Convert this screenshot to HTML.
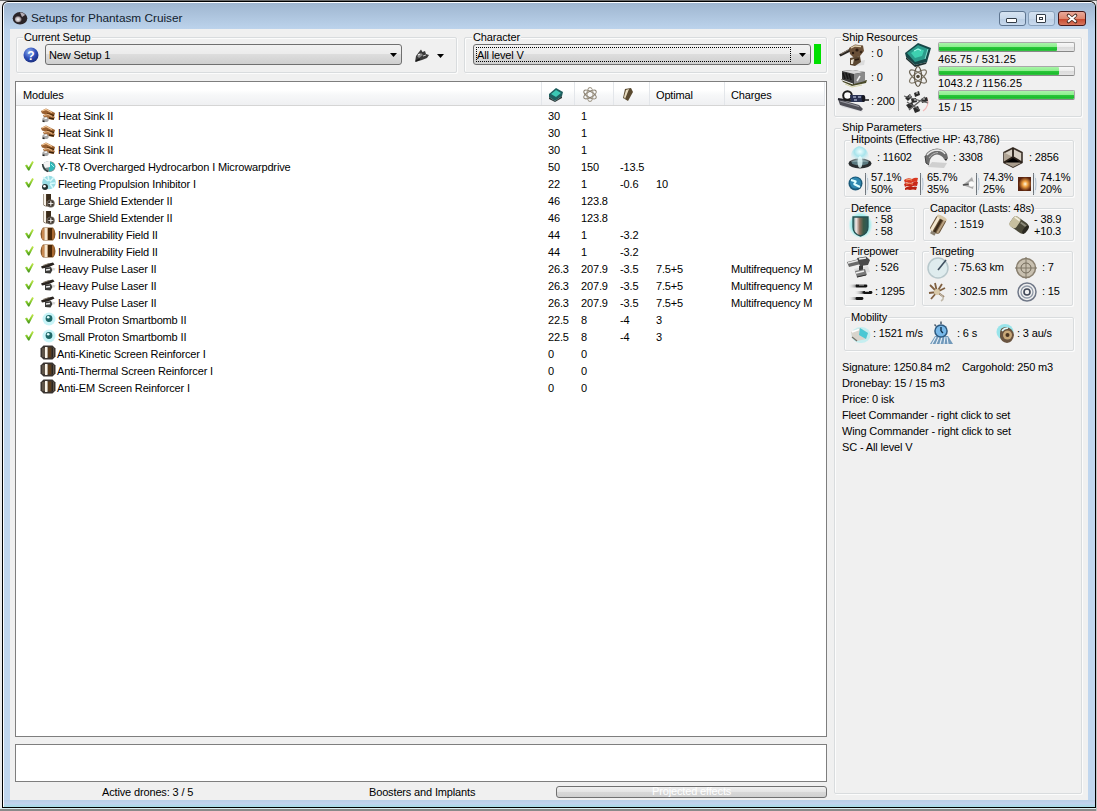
<!DOCTYPE html>
<html><head><meta charset="utf-8">
<style>
html,body{margin:0;padding:0;width:1097px;height:811px;overflow:hidden;background:#e6e6e6;position:relative}
div,span{box-sizing:border-box}
.a{position:absolute}
.t{position:absolute;font-family:"Liberation Sans",sans-serif;font-size:11px;line-height:13px;color:#000;white-space:nowrap;letter-spacing:-0.15px}
.gb{position:absolute;border:1px solid #d9dcde;border-radius:2px;box-shadow:inset 1px 1px 0 #fcfcfc,1px 1px 0 #fcfcfc}
.lbl{background:#f0f0f0;padding:0 1px}
svg{position:absolute;overflow:visible}
</style></head><body>
<svg width="0" height="0" style="position:absolute;left:0;top:0"><defs>
<linearGradient id="chg" x1="0" y1="0" x2="0" y2="1"><stop offset="0" stop-color="#c8ea50"/><stop offset="0.6" stop-color="#7cc428"/><stop offset="1" stop-color="#3a8a18"/></linearGradient>
</defs></svg>

<!-- outside -->
<div class="a" style="left:0;top:0;width:1097px;height:811px;background:#ececec"></div>
<div class="a" style="left:0;top:808px;width:1097px;height:1px;background:#d8eef0"></div>
<div class="a" style="left:0;top:809px;width:1097px;height:2px;background:#8a8a8a"></div>
<div class="a" style="left:1096px;top:0;width:1px;height:811px;background:#c4c4c4"></div>
<div class="a" style="left:0;top:0;width:1097px;height:1px;background:#6a6a6a"></div>
<!-- window frame -->
<div class="a" style="left:2px;top:1px;width:1094px;height:807px;background:#000;border-radius:6px 6px 0 0"></div>
<div class="a" style="left:3px;top:2px;width:1092px;height:805px;background:#fafcff;border-radius:5px 5px 0 0"></div>
<div class="a" style="left:4px;top:3px;width:1091px;height:804px;background:linear-gradient(#9fb6d0,#b3cae3 18px,#bcd3ec 26px,#c0d6ee 40px);border-radius:4px 4px 0 0"></div>
<div class="a" style="left:4px;top:800px;width:1091px;height:7px;background:linear-gradient(#b6cfe6,#c2d2ee 50%,#a4dde6)"></div>
<!-- client -->
<div class="a" style="left:10px;top:29px;width:1078px;height:771px;background:#f0f0f0"></div>
<!-- title -->
<div class="t" style="left:31px;top:12px;font-size:11.8px;color:#10202e;letter-spacing:0">Setups for Phantasm Cruiser</div>
<!-- title buttons -->
<div class="a" style="left:999px;top:11px;width:27px;height:15px;border:1px solid #5e7590;border-radius:3px;background:linear-gradient(#d6e3f1,#c8d9ec 50%,#b9cde3 51%,#c6d8ec)"></div>
<div class="a" style="left:1006px;top:18px;width:11px;height:5px;border:1px solid #333d48;border-radius:1px;background:#fff"></div>
<div class="a" style="left:1028px;top:11px;width:27px;height:15px;border:1px solid #8aa2bc;border-radius:3px;background:linear-gradient(#d3e1f0,#c8d9ec 50%,#bdd0e5 51%,#c9daee)"></div>
<div class="a" style="left:1036px;top:14px;width:10px;height:9px;border:1px solid #333d48;border-radius:1px;background:#fff"></div>
<div class="a" style="left:1039px;top:17px;width:4px;height:3px;border:1px solid #333d48;background:#fff"></div>
<div class="a" style="left:1058px;top:11px;width:28px;height:15px;border:1px solid #47191a;border-radius:3px;background:linear-gradient(#e9a99a,#e08870 50%,#c7452a 51%,#d77860)"></div>
<svg style="left:1058px;top:11px" width="28" height="15"><path d="M10.5 4.5 L17.5 10.5 M17.5 4.5 L10.5 10.5" stroke="#4a2a20" stroke-width="3.6" stroke-linecap="round"/><path d="M10.8 4.8 L17.2 10.2 M17.2 4.8 L10.8 10.2" stroke="#fff" stroke-width="2" stroke-linecap="square"/></svg>
<!-- app icon -->
<svg style="left:12px;top:11px" width="17" height="15"><defs><radialGradient id="apg" cx="0.4" cy="0.55" r="0.5"><stop offset="0" stop-color="#fafafa"/><stop offset="0.6" stop-color="#b8b0b4"/><stop offset="1" stop-color="#2a2226"/></radialGradient></defs><ellipse cx="8" cy="7.3" rx="7.3" ry="6.2" fill="#2a2428"/><ellipse cx="6.8" cy="8" rx="4" ry="3.6" fill="url(#apg)"/><path d="M8 1.5 Q12 1.5 13 4 L10 6 Z" fill="#d8d0d8" opacity="0.8"/></svg>
<!-- group boxes top -->
<div class="gb" style="left:16px;top:37px;width:441px;height:36px"></div>
<div class="t lbl" style="left:23px;top:31px">Current Setup</div>
<div class="gb" style="left:464px;top:37px;width:363px;height:36px"></div>
<div class="t lbl" style="left:472px;top:31px">Character</div>
<!-- help icon -->
<svg style="left:23px;top:47px" width="16" height="16"><defs><radialGradient id="hg" cx="0.4" cy="0.3" r="0.7"><stop offset="0" stop-color="#8fb0f0"/><stop offset="0.6" stop-color="#2f4fb8"/><stop offset="1" stop-color="#1b2f80"/></radialGradient></defs><circle cx="8" cy="8" r="7.5" fill="url(#hg)"/><text x="8" y="12.5" font-family="Liberation Sans" font-weight="bold" font-size="12" fill="#fff" text-anchor="middle">?</text></svg>
<!-- setup combo -->
<div class="a" style="left:45px;top:44px;width:357px;height:21px;border:1px solid #707070;border-radius:3px;background:linear-gradient(#f2f2f2,#ebebeb 50%,#dddddd 50%,#cfcfcf)"></div>
<div class="t" style="left:49px;top:49px">New Setup 1</div>
<svg style="left:390px;top:53px" width="8" height="5"><path d="M0 0 H7 L3.5 4 Z" fill="#000"/></svg>
<!-- ship button -->
<svg style="left:414px;top:48px" width="17" height="16"><path d="M1 14 L2 8 L5 4 L7 1.5 L8.5 4 L11 3 L12 6 L15 7 L13 10 L8 12 Z" fill="#3a3a3a"/><path d="M3 8 L7 5 L9 7 L5 10 Z" fill="#8a8a8a"/><path d="M4 7 L6 6" stroke="#f0f0f0" stroke-width="1.3"/><path d="M9 8 L12 7" stroke="#c8c8c8" stroke-width="1"/><path d="M2 13 L6 11" stroke="#1a1a1a" stroke-width="1.5"/></svg>
<svg style="left:437px;top:54px" width="8" height="5"><path d="M0 0 H7 L3.5 4 Z" fill="#000"/></svg>
<!-- character combo -->
<div class="a" style="left:473px;top:44px;width:338px;height:21px;border:1px solid #707070;border-radius:3px;background:linear-gradient(#f2f2f2,#ebebeb 50%,#dddddd 50%,#cfcfcf)"></div>
<div class="a" style="left:476px;top:47px;width:315px;height:15px;border:1px dotted #000"></div>
<div class="t" style="left:477px;top:49px">All level V</div>
<svg style="left:799px;top:53px" width="8" height="5"><path d="M0 0 H7 L3.5 4 Z" fill="#000"/></svg>
<div class="a" style="left:814px;top:44px;width:7px;height:20px;background:#00e000"></div>

<!-- list box -->
<div class="a" style="left:15px;top:81px;width:812px;height:656px;border:1px solid #7e7e7e;background:#fff"></div>
<div class="a" style="left:16px;top:82px;width:809px;height:24px;background:linear-gradient(#ffffff,#ffffff 35%,#f7f8f9 55%,#eff0f2);border-bottom:1px solid #d5d5d5"></div>
<div class="a" style="left:541px;top:82px;width:1px;height:23px;background:#e3e6ea"></div>
<div class="a" style="left:574px;top:82px;width:1px;height:23px;background:#e3e6ea"></div>
<div class="a" style="left:613px;top:82px;width:1px;height:23px;background:#e3e6ea"></div>
<div class="a" style="left:649px;top:82px;width:1px;height:23px;background:#e3e6ea"></div>
<div class="a" style="left:724px;top:82px;width:1px;height:23px;background:#e3e6ea"></div>
<div class="a" style="left:824px;top:82px;width:1px;height:23px;background:#e3e6ea"></div>
<div class="t" style="left:23px;top:89px">Modules</div>
<div class="t" style="left:656px;top:89px">Optimal</div>
<div class="t" style="left:731px;top:89px">Charges</div>
<!--HDRICONS-->
<!--ROWS-->
<svg style="left:40px;top:107px" width="16" height="16"><path d="M1 4 L6 1.5 L15 6 L14 9.5 L8 8 L2 6.5 Z" fill="#9a6030"/><path d="M2 4 L6 2.5 L12 5.5" stroke="#f4c898" stroke-width="1.2" fill="none"/><path d="M7 6.5 L14 8.5" stroke="#4a2808" stroke-width="1.4"/><path d="M3 8 L8 6.5 L15 10 L13.5 13 L8 12 L4 10.5 Z" fill="#a87040"/><path d="M4 8.5 L8 7.5 L12 9.5" stroke="#e8b888" stroke-width="1" fill="none"/><path d="M9 11 L14 12" stroke="#3a2008" stroke-width="1.4"/><ellipse cx="5.5" cy="12.5" rx="3.2" ry="2.6" fill="#a8a8a8"/><path d="M4.5 11.5 L7 11" stroke="#f8f8f8" stroke-width="1.3"/><path d="M2.5 14 L4.5 14.5" stroke="#202020" stroke-width="1.5"/></svg>
<div class="t" style="left:58px;top:110px">Heat Sink II</div>
<div class="t" style="left:548px;top:110px">30</div>
<div class="t" style="left:581px;top:110px">1</div>
<svg style="left:40px;top:124px" width="16" height="16"><path d="M1 4 L6 1.5 L15 6 L14 9.5 L8 8 L2 6.5 Z" fill="#9a6030"/><path d="M2 4 L6 2.5 L12 5.5" stroke="#f4c898" stroke-width="1.2" fill="none"/><path d="M7 6.5 L14 8.5" stroke="#4a2808" stroke-width="1.4"/><path d="M3 8 L8 6.5 L15 10 L13.5 13 L8 12 L4 10.5 Z" fill="#a87040"/><path d="M4 8.5 L8 7.5 L12 9.5" stroke="#e8b888" stroke-width="1" fill="none"/><path d="M9 11 L14 12" stroke="#3a2008" stroke-width="1.4"/><ellipse cx="5.5" cy="12.5" rx="3.2" ry="2.6" fill="#a8a8a8"/><path d="M4.5 11.5 L7 11" stroke="#f8f8f8" stroke-width="1.3"/><path d="M2.5 14 L4.5 14.5" stroke="#202020" stroke-width="1.5"/></svg>
<div class="t" style="left:58px;top:127px">Heat Sink II</div>
<div class="t" style="left:548px;top:127px">30</div>
<div class="t" style="left:581px;top:127px">1</div>
<svg style="left:40px;top:141px" width="16" height="16"><path d="M1 4 L6 1.5 L15 6 L14 9.5 L8 8 L2 6.5 Z" fill="#9a6030"/><path d="M2 4 L6 2.5 L12 5.5" stroke="#f4c898" stroke-width="1.2" fill="none"/><path d="M7 6.5 L14 8.5" stroke="#4a2808" stroke-width="1.4"/><path d="M3 8 L8 6.5 L15 10 L13.5 13 L8 12 L4 10.5 Z" fill="#a87040"/><path d="M4 8.5 L8 7.5 L12 9.5" stroke="#e8b888" stroke-width="1" fill="none"/><path d="M9 11 L14 12" stroke="#3a2008" stroke-width="1.4"/><ellipse cx="5.5" cy="12.5" rx="3.2" ry="2.6" fill="#a8a8a8"/><path d="M4.5 11.5 L7 11" stroke="#f8f8f8" stroke-width="1.3"/><path d="M2.5 14 L4.5 14.5" stroke="#202020" stroke-width="1.5"/></svg>
<div class="t" style="left:58px;top:144px">Heat Sink II</div>
<div class="t" style="left:548px;top:144px">30</div>
<div class="t" style="left:581px;top:144px">1</div>
<svg style="left:25px;top:161px" width="9" height="10"><path d="M0 4.5 L2 3.5 L3.7 6.3 L7.2 0 L8.8 1 L4.3 9.6 L3.2 9.6 Z" fill="url(#chg)"/></svg>
<svg style="left:40px;top:158px" width="16" height="16"><ellipse cx="9" cy="8.5" rx="6.5" ry="5.5" fill="#7a9090"/><path d="M9 3.5 Q15 4.5 15 9 Q13.5 13 9 13.5 Z" fill="#30b8b8"/><path d="M3 5.5 Q6 2.5 10 3 L10 9 L5 10 Z" fill="#f4f4f4"/><path d="M2.5 6 Q3 11 8 13.5" stroke="#303838" stroke-width="1.4" fill="none"/><path d="M11 6 L14 9" stroke="#a8f0f0" stroke-width="1"/></svg>
<div class="t" style="left:58px;top:161px">Y-T8 Overcharged Hydrocarbon I Microwarpdrive</div>
<div class="t" style="left:548px;top:161px">50</div>
<div class="t" style="left:581px;top:161px">150</div>
<div class="t" style="left:620px;top:161px">-13.5</div>
<svg style="left:25px;top:178px" width="9" height="10"><path d="M0 4.5 L2 3.5 L3.7 6.3 L7.2 0 L8.8 1 L4.3 9.6 L3.2 9.6 Z" fill="url(#chg)"/></svg>
<svg style="left:40px;top:175px" width="16" height="16"><ellipse cx="9" cy="7.5" rx="6.8" ry="6.8" fill="#98dce4"/><path d="M3 2 L8 6 M8 1 L9 6 M14 2 L10 6.5 M15.5 8 L10 8.5 M13 13 L10 9" stroke="#d8fafc" stroke-width="1.6"/><circle cx="5" cy="12" r="3" fill="#203030"/><circle cx="4.5" cy="11.3" r="1.3" fill="#fff"/></svg>
<div class="t" style="left:58px;top:178px">Fleeting Propulsion Inhibitor I</div>
<div class="t" style="left:548px;top:178px">22</div>
<div class="t" style="left:581px;top:178px">1</div>
<div class="t" style="left:620px;top:178px">-0.6</div>
<div class="t" style="left:656px;top:178px">10</div>
<svg style="left:40px;top:192px" width="16" height="16"><path d="M3 2 L3 11 Q3 14.5 7 14.5 L11 14.5 L11 2 Z" fill="#5a4a38"/><path d="M3.5 2 L6 2 L6 14 L4 13 Q3.5 12 3.5 11 Z" fill="#f8f2e8"/><path d="M6.5 2 L11 2 L11 9 L6.5 9 Z" fill="#3a2a18"/><circle cx="10.8" cy="11.5" r="3.9" fill="#686058"/><circle cx="10.8" cy="11.5" r="2.9" fill="#403830"/><path d="M10.8 9 L10.8 14 M8.3 11.5 L13.3 11.5" stroke="#d8d0c8" stroke-width="1"/><circle cx="10.8" cy="11.5" r="1" fill="#f0f0f0"/></svg>
<div class="t" style="left:58px;top:195px">Large Shield Extender II</div>
<div class="t" style="left:548px;top:195px">46</div>
<div class="t" style="left:581px;top:195px">123.8</div>
<svg style="left:40px;top:209px" width="16" height="16"><path d="M3 2 L3 11 Q3 14.5 7 14.5 L11 14.5 L11 2 Z" fill="#5a4a38"/><path d="M3.5 2 L6 2 L6 14 L4 13 Q3.5 12 3.5 11 Z" fill="#f8f2e8"/><path d="M6.5 2 L11 2 L11 9 L6.5 9 Z" fill="#3a2a18"/><circle cx="10.8" cy="11.5" r="3.9" fill="#686058"/><circle cx="10.8" cy="11.5" r="2.9" fill="#403830"/><path d="M10.8 9 L10.8 14 M8.3 11.5 L13.3 11.5" stroke="#d8d0c8" stroke-width="1"/><circle cx="10.8" cy="11.5" r="1" fill="#f0f0f0"/></svg>
<div class="t" style="left:58px;top:212px">Large Shield Extender II</div>
<div class="t" style="left:548px;top:212px">46</div>
<div class="t" style="left:581px;top:212px">123.8</div>
<svg style="left:25px;top:229px" width="9" height="10"><path d="M0 4.5 L2 3.5 L3.7 6.3 L7.2 0 L8.8 1 L4.3 9.6 L3.2 9.6 Z" fill="url(#chg)"/></svg>
<svg style="left:40px;top:226px" width="16" height="16"><path d="M3 1.5 L13 1.5 Q15.5 4 15.5 8 Q15.5 12 13 14.5 L3 14.5 Q0.5 12 0.5 8 Q0.5 4 3 1.5 Z" fill="#8a5a2a"/><path d="M2 3 L4.5 2 L4.5 14 L2 13 Z" fill="#c88850"/><rect x="4.5" y="2" width="3" height="12" fill="#f8e8d0"/><rect x="8" y="2" width="4" height="12" fill="#4a2808"/><rect x="12" y="3" width="2" height="10" fill="#a86830"/></svg>
<div class="t" style="left:58px;top:229px">Invulnerability Field II</div>
<div class="t" style="left:548px;top:229px">44</div>
<div class="t" style="left:581px;top:229px">1</div>
<div class="t" style="left:620px;top:229px">-3.2</div>
<svg style="left:25px;top:246px" width="9" height="10"><path d="M0 4.5 L2 3.5 L3.7 6.3 L7.2 0 L8.8 1 L4.3 9.6 L3.2 9.6 Z" fill="url(#chg)"/></svg>
<svg style="left:40px;top:243px" width="16" height="16"><path d="M3 1.5 L13 1.5 Q15.5 4 15.5 8 Q15.5 12 13 14.5 L3 14.5 Q0.5 12 0.5 8 Q0.5 4 3 1.5 Z" fill="#8a5a2a"/><path d="M2 3 L4.5 2 L4.5 14 L2 13 Z" fill="#c88850"/><rect x="4.5" y="2" width="3" height="12" fill="#f8e8d0"/><rect x="8" y="2" width="4" height="12" fill="#4a2808"/><rect x="12" y="3" width="2" height="10" fill="#a86830"/></svg>
<div class="t" style="left:58px;top:246px">Invulnerability Field II</div>
<div class="t" style="left:548px;top:246px">44</div>
<div class="t" style="left:581px;top:246px">1</div>
<div class="t" style="left:620px;top:246px">-3.2</div>
<svg style="left:25px;top:263px" width="9" height="10"><path d="M0 4.5 L2 3.5 L3.7 6.3 L7.2 0 L8.8 1 L4.3 9.6 L3.2 9.6 Z" fill="url(#chg)"/></svg>
<svg style="left:40px;top:260px" width="16" height="16"><path d="M1 6.5 L7 4 L13 2.5 L14.5 4.5 L8 7.5 L2 8.5 Z" fill="#2a2420"/><path d="M3 5.5 L9 3.5" stroke="#8a8070" stroke-width="1"/><path d="M5 8 L11 7 L12.5 10 L10.5 13.5 L5 13 Z" fill="#3a3a38"/><path d="M6 10 L10 9.5" stroke="#f0f0f0" stroke-width="1.3"/><path d="M11.5 7.5 L15.5 8.5 L14 11" fill="#c0c0c0" opacity="0.7"/></svg>
<div class="t" style="left:58px;top:263px">Heavy Pulse Laser II</div>
<div class="t" style="left:548px;top:263px">26.3</div>
<div class="t" style="left:581px;top:263px">207.9</div>
<div class="t" style="left:620px;top:263px">-3.5</div>
<div class="t" style="left:656px;top:263px">7.5+5</div>
<div class="t" style="left:731px;top:263px">Multifrequency M</div>
<svg style="left:25px;top:280px" width="9" height="10"><path d="M0 4.5 L2 3.5 L3.7 6.3 L7.2 0 L8.8 1 L4.3 9.6 L3.2 9.6 Z" fill="url(#chg)"/></svg>
<svg style="left:40px;top:277px" width="16" height="16"><path d="M1 6.5 L7 4 L13 2.5 L14.5 4.5 L8 7.5 L2 8.5 Z" fill="#2a2420"/><path d="M3 5.5 L9 3.5" stroke="#8a8070" stroke-width="1"/><path d="M5 8 L11 7 L12.5 10 L10.5 13.5 L5 13 Z" fill="#3a3a38"/><path d="M6 10 L10 9.5" stroke="#f0f0f0" stroke-width="1.3"/><path d="M11.5 7.5 L15.5 8.5 L14 11" fill="#c0c0c0" opacity="0.7"/></svg>
<div class="t" style="left:58px;top:280px">Heavy Pulse Laser II</div>
<div class="t" style="left:548px;top:280px">26.3</div>
<div class="t" style="left:581px;top:280px">207.9</div>
<div class="t" style="left:620px;top:280px">-3.5</div>
<div class="t" style="left:656px;top:280px">7.5+5</div>
<div class="t" style="left:731px;top:280px">Multifrequency M</div>
<svg style="left:25px;top:297px" width="9" height="10"><path d="M0 4.5 L2 3.5 L3.7 6.3 L7.2 0 L8.8 1 L4.3 9.6 L3.2 9.6 Z" fill="url(#chg)"/></svg>
<svg style="left:40px;top:294px" width="16" height="16"><path d="M1 6.5 L7 4 L13 2.5 L14.5 4.5 L8 7.5 L2 8.5 Z" fill="#2a2420"/><path d="M3 5.5 L9 3.5" stroke="#8a8070" stroke-width="1"/><path d="M5 8 L11 7 L12.5 10 L10.5 13.5 L5 13 Z" fill="#3a3a38"/><path d="M6 10 L10 9.5" stroke="#f0f0f0" stroke-width="1.3"/><path d="M11.5 7.5 L15.5 8.5 L14 11" fill="#c0c0c0" opacity="0.7"/></svg>
<div class="t" style="left:58px;top:297px">Heavy Pulse Laser II</div>
<div class="t" style="left:548px;top:297px">26.3</div>
<div class="t" style="left:581px;top:297px">207.9</div>
<div class="t" style="left:620px;top:297px">-3.5</div>
<div class="t" style="left:656px;top:297px">7.5+5</div>
<div class="t" style="left:731px;top:297px">Multifrequency M</div>
<svg style="left:25px;top:314px" width="9" height="10"><path d="M0 4.5 L2 3.5 L3.7 6.3 L7.2 0 L8.8 1 L4.3 9.6 L3.2 9.6 Z" fill="url(#chg)"/></svg>
<svg style="left:40px;top:311px" width="16" height="16"><circle cx="9" cy="8" r="6.5" fill="#c8f4f8"/><circle cx="9" cy="7.5" r="3.4" fill="#1e6868"/><circle cx="8.2" cy="6.3" r="1.3" fill="#e0ffff"/></svg>
<div class="t" style="left:58px;top:314px">Small Proton Smartbomb II</div>
<div class="t" style="left:548px;top:314px">22.5</div>
<div class="t" style="left:581px;top:314px">8</div>
<div class="t" style="left:620px;top:314px">-4</div>
<div class="t" style="left:656px;top:314px">3</div>
<svg style="left:25px;top:331px" width="9" height="10"><path d="M0 4.5 L2 3.5 L3.7 6.3 L7.2 0 L8.8 1 L4.3 9.6 L3.2 9.6 Z" fill="url(#chg)"/></svg>
<svg style="left:40px;top:328px" width="16" height="16"><circle cx="9" cy="8" r="6.5" fill="#c8f4f8"/><circle cx="9" cy="7.5" r="3.4" fill="#1e6868"/><circle cx="8.2" cy="6.3" r="1.3" fill="#e0ffff"/></svg>
<div class="t" style="left:58px;top:331px">Small Proton Smartbomb II</div>
<div class="t" style="left:548px;top:331px">22.5</div>
<div class="t" style="left:581px;top:331px">8</div>
<div class="t" style="left:620px;top:331px">-4</div>
<div class="t" style="left:656px;top:331px">3</div>
<svg style="left:40px;top:345px" width="16" height="16"><path d="M3.5 0.5 L12.5 0.5 L15.5 3.5 L15.5 11.5 L12.5 14.5 L3.5 14.5 L0.5 11.5 L0.5 3.5 Z" fill="#3a3430"/><path d="M2 3 L14 3 L14 12 L2 12 Z" fill="#5e5448"/><rect x="5" y="2" width="2.5" height="11" fill="#fbf4e8"/><rect x="8" y="2.5" width="3.5" height="10" fill="#5a3c1c"/><rect x="11.5" y="3" width="1.5" height="9" fill="#2a2420"/></svg>
<div class="t" style="left:57px;top:348px">Anti-Kinetic Screen Reinforcer I</div>
<div class="t" style="left:548px;top:348px">0</div>
<div class="t" style="left:581px;top:348px">0</div>
<svg style="left:40px;top:362px" width="16" height="16"><path d="M3.5 0.5 L12.5 0.5 L15.5 3.5 L15.5 11.5 L12.5 14.5 L3.5 14.5 L0.5 11.5 L0.5 3.5 Z" fill="#3a3430"/><path d="M2 3 L14 3 L14 12 L2 12 Z" fill="#5e5448"/><rect x="5" y="2" width="2.5" height="11" fill="#fbf4e8"/><rect x="8" y="2.5" width="3.5" height="10" fill="#5a3c1c"/><rect x="11.5" y="3" width="1.5" height="9" fill="#2a2420"/></svg>
<div class="t" style="left:57px;top:365px">Anti-Thermal Screen Reinforcer I</div>
<div class="t" style="left:548px;top:365px">0</div>
<div class="t" style="left:581px;top:365px">0</div>
<svg style="left:40px;top:379px" width="16" height="16"><path d="M3.5 0.5 L12.5 0.5 L15.5 3.5 L15.5 11.5 L12.5 14.5 L3.5 14.5 L0.5 11.5 L0.5 3.5 Z" fill="#3a3430"/><path d="M2 3 L14 3 L14 12 L2 12 Z" fill="#5e5448"/><rect x="5" y="2" width="2.5" height="11" fill="#fbf4e8"/><rect x="8" y="2.5" width="3.5" height="10" fill="#5a3c1c"/><rect x="11.5" y="3" width="1.5" height="9" fill="#2a2420"/></svg>
<div class="t" style="left:57px;top:382px">Anti-EM Screen Reinforcer I</div>
<div class="t" style="left:548px;top:382px">0</div>
<div class="t" style="left:581px;top:382px">0</div>
<!--/ROWS-->

<!-- second box -->
<div class="a" style="left:15px;top:744px;width:812px;height:38px;border:1px solid #7e7e7e;background:#fff"></div>
<div class="t" style="left:102px;top:786px">Active drones: 3 / 5</div>
<div class="t" style="left:369px;top:786px">Boosters and Implants</div>
<div class="a" style="left:556px;top:786px;width:271px;height:12px;border:1px solid #707070;border-radius:3px;background:linear-gradient(#f0f0f0,#e4e4e4 50%,#d8d8d8 51%,#d0d0d0)"></div>
<div class="t" style="left:652px;top:785px;color:#fff">Projected effects</div>

<!-- right panel -->
<!--RIGHT-->
<div class="gb" style="left:834px;top:37px;width:248px;height:80px"></div>
<div class="t lbl" style="left:841px;top:31px">Ship Resources</div>
<svg style="left:838px;top:43px" width="28" height="24"><path d="M14 20 L27 17 L26 22 L16 23 Z" fill="#c8c8c8" opacity="0.5"/><path d="M1 11.5 L12 5.5 L13.5 8 L2.5 13.5 Z" fill="#2a2622"/><path d="M3 11 L11 6.5" stroke="#a09080" stroke-width="0.8"/><path d="M11 5 L17 1.5 L25 2.5 L26 8 L22 13 L16 15 L12 11 Z" fill="#6a5038"/><path d="M13 5 L17 3 L23 3.5" stroke="#e0d0b0" stroke-width="1.3" fill="none"/><circle cx="19" cy="7" r="1.6" fill="#2a1a10"/><circle cx="23" cy="9" r="1.3" fill="#3a2818"/><circle cx="15" cy="10" r="1.2" fill="#2a1a10"/><path d="M12 15 L22 13 L23 19 L17 23 L12 22 Z" fill="#5a4630"/><path d="M13 17 L16 16 L15 21 L13 21 Z" fill="#e8e0d0"/><path d="M17 17 L21 16" stroke="#2a1a10" stroke-width="1.4"/></svg>
<div class="t" style="left:871px;top:47px;">: 0</div>
<svg style="left:840px;top:69px" width="28" height="19"><path d="M1 10 L3 13 L12 17 L26 14 L27 11 L12 14 Z" fill="#4a4a28"/><path d="M5 15 L12 18 L22 16" stroke="#c8c888" stroke-width="1" fill="none" opacity="0.7"/><path d="M2 2 L13 1 L25 3 L25 12 L13 15 L2 11 Z" fill="#3a3a3a"/><path d="M2 2 L13 1 L25 3 L14 5 Z" fill="#d8d8d8"/><path d="M3 4 L5 10 M6 4 L8 10 M9 5 L11 11" stroke="#181818" stroke-width="1.6"/><path d="M14 5 L25 3 L25 12 L14 15 Z" fill="#8a8a8a"/><path d="M17 12 L20 7" stroke="#f0f0f0" stroke-width="1.5"/><path d="M2 11 L13 15" stroke="#f0f0f0" stroke-width="1"/></svg>
<div class="t" style="left:871px;top:71px;">: 0</div>
<svg style="left:837px;top:89px" width="33" height="24"><path d="M3 13 L24 19 L26 23 L5 18 Z" fill="#c8c8d0" opacity="0.5"/><path d="M1 10 L22 16 L26 20 L24 22 L3 16 Z" fill="#505058"/><path d="M3 12 L22 17.5" stroke="#9898a0" stroke-width="1.2"/><path d="M1 10 L14 12" stroke="#282830" stroke-width="2"/><circle cx="10.5" cy="6.5" r="4.3" fill="#fafafa" stroke="#1a1a1a" stroke-width="2"/><path d="M13 6 L26 6 L27.5 10 L27 13 L14 13 Z" fill="#283050"/><path d="M16 8 L19 8 M21 8 L24 8 M17 11 L20 11" stroke="#d8e0f8" stroke-width="1"/><ellipse cx="26.5" cy="9.5" rx="1.8" ry="3.5" fill="#181820"/><path d="M28 11 L32 11" stroke="#1a1a1a" stroke-width="1.5"/></svg>
<div class="t" style="left:871px;top:95px;">: 200</div>
<div class="a" style="left:898px;top:46px;width:1px;height:65px;background:#a0a0a0"></div>
<svg style="left:904px;top:42px" width="28" height="25"><path d="M1 11 L14 1 L27 6 L23 20 L11 23 L2 15 Z" fill="#164848"/><path d="M3 11 L14 3 L24 7 L21 17 L11 20 Z" fill="#2a9a8a"/><path d="M7 11 L14 6 L20 8.5 L18 14 L11 16 Z" fill="#3ed0b0"/><path d="M10 9 L14 7 L17 8.5" stroke="#b0fff0" stroke-width="1" fill="none"/><path d="M2 15 L11 23 L23 20 L22 22 L11 25 L2 17 Z" fill="#203030"/><path d="M21 17 L24 7" stroke="#80e0d0" stroke-width="1"/></svg>
<svg style="left:907px;top:65px" width="22" height="23"><ellipse cx="11" cy="11.5" rx="10" ry="3.8" fill="none" stroke="#70685a" stroke-width="1.2" transform="rotate(35 11 11.5)"/><ellipse cx="11" cy="11.5" rx="10" ry="3.8" fill="none" stroke="#807868" stroke-width="1.2" transform="rotate(-35 11 11.5)"/><ellipse cx="11" cy="11.5" rx="3.5" ry="10" fill="none" stroke="#605848" stroke-width="1.2"/><circle cx="11" cy="11.5" r="1.8" fill="#504838"/></svg>
<svg style="left:903px;top:90px" width="28" height="24"><path d="M20 21 Q27 16 24 8" stroke="#f0b8b8" stroke-width="1.2" fill="none"/><path d="M2 8 L7 4 L9 7 L5 11 Z M11 3 L16 1 L17 5 L12 7 Z M18 9 L24 7 L25 11 L19 13 Z M3 15 L9 12 L11 16 L6 19 Z M10 18 L15 16 L17 21 L12 23 Z M8 9 L13 8 L14 12 L9 13 Z" fill="#2a2a2a"/><path d="M1 6 L25 13 M6 20 L22 7 M4 12 L17 20" stroke="#606060" stroke-width="1.3"/><path d="M6 6 L8 6 M13 3 L15 3 M20 9 L22 9 M11 10 L13 10" stroke="#d8d8d8" stroke-width="1"/></svg>
<div class="a" style="left:938px;top:42px;width:137px;height:10px;border:1px solid #a8a8a8;border-bottom-color:#888;border-radius:2px;background:linear-gradient(#f8f8f8,#eeeeee 45%,#dcdcdc 55%,#e4e4e4)"></div>
<div class="a" style="left:939px;top:43px;width:118px;height:8px;border-radius:1px;background:linear-gradient(#a8f6a8,#90ee90 45%,#2ac83a 52%,#1cba2c 85%,#40c850)"></div>
<div class="a" style="left:938px;top:66px;width:137px;height:10px;border:1px solid #a8a8a8;border-bottom-color:#888;border-radius:2px;background:linear-gradient(#f8f8f8,#eeeeee 45%,#dcdcdc 55%,#e4e4e4)"></div>
<div class="a" style="left:939px;top:67px;width:120px;height:8px;border-radius:1px;background:linear-gradient(#a8f6a8,#90ee90 45%,#2ac83a 52%,#1cba2c 85%,#40c850)"></div>
<div class="a" style="left:938px;top:90px;width:137px;height:10px;border:1px solid #a8a8a8;border-bottom-color:#888;border-radius:2px;background:linear-gradient(#f8f8f8,#eeeeee 45%,#dcdcdc 55%,#e4e4e4)"></div>
<div class="a" style="left:939px;top:91px;width:135px;height:8px;border-radius:1px;background:linear-gradient(#a8f6a8,#90ee90 45%,#2ac83a 52%,#1cba2c 85%,#40c850)"></div>
<div class="t" style="left:938px;top:53px;letter-spacing:0.1px">465.75 / 531.25</div>
<div class="t" style="left:938px;top:77px;letter-spacing:0.15px">1043.2 / 1156.25</div>
<div class="t" style="left:938px;top:101px;letter-spacing:0.1px">15 / 15</div>
<div class="gb" style="left:834px;top:128px;width:248px;height:666px"></div>
<div class="t lbl" style="left:841px;top:121px">Ship Parameters</div>
<div class="gb" style="left:844px;top:140px;width:230px;height:57px"></div>
<div class="t lbl" style="left:850px;top:133px">Hitpoints (Effective HP: 43,786)</div>
<svg style="left:847px;top:145px" width="26" height="24"><defs><radialGradient id="shg" cx="0.5" cy="0.35" r="0.6"><stop offset="0" stop-color="#f0ffff"/><stop offset="0.5" stop-color="#a8e4ec"/><stop offset="1" stop-color="#d8eef2" stop-opacity="0.3"/></radialGradient></defs><ellipse cx="13" cy="18.5" rx="11.5" ry="5" fill="#2a2e30"/><ellipse cx="13" cy="17.5" rx="8.5" ry="3" fill="#5a7a80"/><path d="M4 17 Q2 4 12 1 Q23 3 22 17 Z" fill="url(#shg)"/><ellipse cx="13" cy="17" rx="2.5" ry="6" fill="#e8ffff" opacity="0.8"/></svg>
<div class="t" style="left:877px;top:151px;">: 11602</div>
<svg style="left:924px;top:147px" width="26" height="22"><path d="M4 20 L20 21 L23 16 L8 15 Z" fill="#b0b0b0" opacity="0.5"/><path d="M1 9 Q4 2 13 1.5 Q20 2 23 7 L24 11 L20 12 Q18 8 13 7.5 Q8 8 6 13 L5 18 L2 16 Z" fill="#6e6e6e"/><path d="M3 8 Q7 3 14 3 Q19 3.5 21 7" stroke="#e8e8e8" stroke-width="1.3" fill="none"/><path d="M5 11 Q8 6 14 5.5" stroke="#b8b8b8" stroke-width="1" fill="none"/><path d="M20 12 L24 11 L22 14 Z" fill="#303030"/><path d="M1 9 L2 16 L5 18" stroke="#404040" stroke-width="1" fill="none"/></svg>
<div class="t" style="left:953px;top:151px;">: 3308</div>
<svg style="left:1003px;top:147px" width="20" height="21"><path d="M10 1 L19 5.5 L19 15.5 L10 20 L1 15.5 L1 5.5 Z" fill="#d8d0c4" stroke="#3a3028" stroke-width="1.6"/><path d="M1 5.5 L10 10 L1 15.5 Z" fill="#b0a494"/><path d="M10 10 L19 15.5 L10 20 L1 15.5 Z" fill="#a89c8c"/><path d="M10 1 L10 10 M1 15.5 L10 10 L19 15.5" stroke="#2a2018" stroke-width="1.8"/></svg>
<div class="t" style="left:1029px;top:151px;">: 2856</div>
<svg style="left:848px;top:176px" width="15" height="15"><circle cx="7.5" cy="7.5" r="7" fill="#1a5a7a"/><circle cx="7.5" cy="7" r="5.5" fill="#2e88b0"/><path d="M3 4 L8 5.5 L6 8 L12 11" stroke="#e0ffff" stroke-width="2" fill="none" stroke-linejoin="bevel"/></svg>
<svg style="left:864px;top:172px" width="6" height="24"><path d="M1.5 1 L1.5 23" stroke="#6e747a" stroke-width="1"/><path d="M2.5 2 Q5 12 2.5 22" stroke="#e0e8ee" stroke-width="1.6" fill="none"/><path d="M3.5 6 Q4.5 12 3.5 18" stroke="#a8b8c8" stroke-width="0.8" fill="none"/></svg>
<div class="t" style="left:871px;top:171px;">57.1%</div>
<div class="t" style="left:871px;top:183px;">50%</div>
<svg style="left:903px;top:176px" width="16" height="15"><path d="M1 4 Q5 1 9 3 Q12 1 15 2 L14 6 Q11 5 8 7 Q4 5 2 7 Z" fill="#d83820"/><path d="M1 8 Q5 5 9 7 Q12 5 15 6 L14 10 Q11 9 8 11 Q4 9 2 11 Z" fill="#c82818"/><path d="M2 12 Q6 9 10 11 Q12 10 14 11 L13 14 Q10 13 7 14 Q4 13 2 14 Z" fill="#b82010"/><path d="M3 4 Q6 3 9 4 M3 8 Q6 7 10 8" stroke="#f8a070" stroke-width="1" fill="none"/></svg>
<svg style="left:919px;top:172px" width="6" height="24"><path d="M1.5 1 L1.5 23" stroke="#6e747a" stroke-width="1"/><path d="M2.5 2 Q5 12 2.5 22" stroke="#e0e8ee" stroke-width="1.6" fill="none"/><path d="M3.5 6 Q4.5 12 3.5 18" stroke="#a8b8c8" stroke-width="0.8" fill="none"/></svg>
<div class="t" style="left:927px;top:171px;">65.7%</div>
<div class="t" style="left:927px;top:183px;">35%</div>
<svg style="left:961px;top:176px" width="14" height="15"><path d="M1 9 L7 5 L11 1 L13 7 L12 13 L7 11 Z" fill="#9a9a9a" opacity="0.8"/><path d="M2 9 L9 8" stroke="#505050" stroke-width="1.6"/><circle cx="10.5" cy="8" r="2.8" fill="#fafafa"/></svg>
<svg style="left:975px;top:172px" width="6" height="24"><path d="M1.5 1 L1.5 23" stroke="#6e747a" stroke-width="1"/><path d="M2.5 2 Q5 12 2.5 22" stroke="#e0e8ee" stroke-width="1.6" fill="none"/><path d="M3.5 6 Q4.5 12 3.5 18" stroke="#a8b8c8" stroke-width="0.8" fill="none"/></svg>
<div class="t" style="left:983px;top:171px;">74.3%</div>
<div class="t" style="left:983px;top:183px;">25%</div>
<svg style="left:1017px;top:176px" width="15" height="15"><defs><radialGradient id="exg" cx="0.55" cy="0.5" r="0.5"><stop offset="0" stop-color="#fff8e0"/><stop offset="0.4" stop-color="#f0a040"/><stop offset="1" stop-color="#5a2410"/></radialGradient></defs><rect x="1" y="1" width="13" height="14" fill="url(#exg)"/></svg>
<svg style="left:1032px;top:172px" width="6" height="24"><path d="M1.5 1 L1.5 23" stroke="#6e747a" stroke-width="1"/><path d="M2.5 2 Q5 12 2.5 22" stroke="#e0e8ee" stroke-width="1.6" fill="none"/><path d="M3.5 6 Q4.5 12 3.5 18" stroke="#a8b8c8" stroke-width="0.8" fill="none"/></svg>
<div class="t" style="left:1040px;top:171px;">74.1%</div>
<div class="t" style="left:1040px;top:183px;">20%</div>
<div class="gb" style="left:844px;top:208px;width:71px;height:33px"></div>
<div class="t lbl" style="left:850px;top:202px">Defence</div>
<svg style="left:848px;top:212px" width="25" height="26"><defs><radialGradient id="dfg" cx="0.5" cy="0.5" r="0.5"><stop offset="0" stop-color="#80dcdc"/><stop offset="0.8" stop-color="#a8ecec"/><stop offset="1" stop-color="#d0f4f4" stop-opacity="0.3"/></radialGradient><linearGradient id="dfs" x1="0" y1="0" x2="1" y2="0"><stop offset="0" stop-color="#306a68"/><stop offset="0.2" stop-color="#f8eeee"/><stop offset="0.45" stop-color="#8a6a58"/><stop offset="0.7" stop-color="#3a5a48"/><stop offset="1" stop-color="#2a5a5a"/></linearGradient></defs><ellipse cx="12.5" cy="13" rx="12" ry="13" fill="url(#dfg)"/><path d="M5 5 L20 5 L20 15 Q20 22 12.5 24 Q5 22 5 15 Z" fill="url(#dfs)"/><path d="M5 5 L20 5 L20 15 Q20 22 12.5 24 Q5 22 5 15 Z" fill="none" stroke="#245050" stroke-width="1.3"/></svg>
<div class="t" style="left:875px;top:213px;">: 58</div>
<div class="t" style="left:875px;top:225px;">: 58</div>
<div class="gb" style="left:923px;top:208px;width:151px;height:33px"></div>
<div class="t lbl" style="left:929px;top:202px">Capacitor (Lasts: 48s)</div>
<svg style="left:928px;top:214px" width="19" height="23"><g transform="rotate(30 9.5 11.5)"><rect x="4" y="2" width="11" height="17" rx="3" fill="#6a5438"/><rect x="5" y="2" width="3" height="17" fill="#f4e8d0"/><rect x="9" y="2" width="2" height="17" fill="#3a2a18"/><rect x="12" y="3" width="2" height="15" fill="#b8a080"/><ellipse cx="9.5" cy="2.5" rx="5.5" ry="1.8" fill="#d8c8a8"/><rect x="7" y="19" width="5" height="3" fill="#8a8070"/></g></svg>
<div class="t" style="left:954px;top:218px;">: 1519</div>
<svg style="left:1007px;top:215px" width="24" height="20"><g transform="rotate(35 12 10)"><rect x="3" y="4" width="18" height="12" rx="4" fill="#4a4838"/><rect x="3" y="4" width="8" height="12" rx="3" fill="#c8c0a0"/><path d="M4 6 L10 6" stroke="#f4f0e0" stroke-width="1.5"/><rect x="12" y="6" width="7" height="2" fill="#8a8878"/><ellipse cx="20" cy="10" rx="2" ry="5" fill="#2a2820"/></g></svg>
<div class="t" style="left:1034px;top:213px;">- 38.9</div>
<div class="t" style="left:1034px;top:225px;">+10.3</div>
<div class="gb" style="left:844px;top:251px;width:71px;height:55px"></div>
<div class="t lbl" style="left:850px;top:245px">Firepower</div>
<svg style="left:846px;top:256px" width="25" height="23"><path d="M8 13 L22 10 L24 16 L10 18 Z" fill="#c8c8c8" opacity="0.5"/><path d="M1 6 L13 3 L15 8 L3 11 Z" fill="#6a6a6a"/><path d="M2 7 L12 4.5" stroke="#e8e8e8" stroke-width="1.4"/><path d="M11 2 L20 0.5 L24 4 L22 9 L14 10 Z" fill="#4a4a4a"/><path d="M13 3 L20 2" stroke="#f0f0f0" stroke-width="1.5"/><path d="M13 10 L17 9 L17 14 L13 15 Z" fill="#3a3a3a"/><path d="M9 15 L19 13 L21 19 L11 21.5 Z" fill="#7a7a7a"/><path d="M10 17 L18 15" stroke="#f0f0f0" stroke-width="1.3"/><path d="M11 21 L20 19" stroke="#303030" stroke-width="1"/></svg>
<div class="t" style="left:875px;top:261px;">: 526</div>
<svg style="left:848px;top:283px" width="26" height="19"><defs><linearGradient id="dmg" x1="0" y1="0" x2="1" y2="0"><stop offset="0" stop-color="#f0f0f0" stop-opacity="0"/><stop offset="1" stop-color="#707070"/></linearGradient></defs><rect x="0" y="1.5" width="9" height="3" fill="url(#dmg)"/><rect x="6" y="8" width="9" height="3" fill="url(#dmg)"/><rect x="0" y="14" width="9" height="3" fill="url(#dmg)"/><path d="M9 3 L18 3" stroke="#141414" stroke-width="2.8" stroke-linecap="round"/><path d="M16 9.5 L23 9.5" stroke="#141414" stroke-width="2.8" stroke-linecap="round"/><path d="M9 15.5 L14 15.5" stroke="#141414" stroke-width="2.8" stroke-linecap="round"/><path d="M11 2 L16 2 M17 8.5 L21 8.5" stroke="#e0e0e0" stroke-width="0.8"/></svg>
<div class="t" style="left:875px;top:285px;">: 1295</div>
<div class="gb" style="left:922px;top:251px;width:151px;height:55px"></div>
<div class="t lbl" style="left:929px;top:245px">Targeting</div>
<svg style="left:927px;top:257px" width="22" height="22"><circle cx="11" cy="11" r="10" fill="#dfecee"/><circle cx="11" cy="11" r="10" fill="none" stroke="#b8c8cc" stroke-width="1.5"/><path d="M11 13 L19 3" stroke="#405060" stroke-width="1.6"/></svg>
<div class="t" style="left:954px;top:261px;">: 75.63 km</div>
<svg style="left:1014px;top:256px" width="24" height="24"><circle cx="12" cy="12" r="9.5" fill="#c8c0b0"/><circle cx="12" cy="12" r="9.5" fill="none" stroke="#8a8070" stroke-width="1.5"/><circle cx="12" cy="12" r="5" fill="none" stroke="#706858" stroke-width="1"/><path d="M12 1 L12 23 M1 12 L23 12" stroke="#807868" stroke-width="1"/></svg>
<div class="t" style="left:1042px;top:261px;">: 7</div>
<svg style="left:928px;top:282px" width="19" height="20"><path d="M9 10 L2 3 M9 10 L7 1 M9 10 L14 2 M9 10 L17 6 M9 10 L3 17 M9 10 L16 15 M9 10 L1 11" stroke="#806040" stroke-width="1.8"/><circle cx="9" cy="10" r="3" fill="#d8c8a8"/><path d="M12 12 Q18 16 13 19" stroke="#c0b8a8" stroke-width="1.5" fill="none"/></svg>
<div class="t" style="left:954px;top:285px;">: 302.5 mm</div>
<svg style="left:1017px;top:282px" width="20" height="20"><circle cx="10" cy="10" r="9" fill="none" stroke="#707888" stroke-width="1.5"/><circle cx="10" cy="10" r="6" fill="none" stroke="#909aa8" stroke-width="1.3"/><circle cx="10" cy="10" r="3" fill="none" stroke="#404858" stroke-width="1.6"/></svg>
<div class="t" style="left:1042px;top:285px;">: 15</div>
<div class="gb" style="left:844px;top:317px;width:230px;height:34px"></div>
<div class="t lbl" style="left:850px;top:311px">Mobility</div>
<svg style="left:849px;top:325px" width="22" height="19"><ellipse cx="12" cy="10" rx="9.5" ry="8" fill="#a8ecf0" opacity="0.6"/><path d="M2 7 L11 3 L19 8 L17 14 L8 16 L3 12 Z" fill="#d8d4cc"/><path d="M11 3 L19 8 L17 14 L10 10 Z" fill="#48c8d4"/><path d="M3 7 L10 4.5" stroke="#fff" stroke-width="1.5"/><path d="M3 12 L8 16" stroke="#707068" stroke-width="1.3"/></svg>
<div class="t" style="left:873px;top:327px;">: 1521 m/s</div>
<svg style="left:928px;top:321px" width="27" height="24"><path d="M2 23 L7 15 L20 15 L25 23 Z" fill="#5a8ab0" opacity="0.85"/><path d="M4 23 L8 16 M8 23 L11 16 M12 23 L14 16 M16 23 L17 16 M20 23 L19 16" stroke="#e8f0f8" stroke-width="1.1"/><circle cx="13" cy="10" r="6.8" fill="#2e5a80"/><circle cx="13" cy="10" r="5.3" fill="#78b8e8"/><path d="M13 10 L13 6 M13 10 L15 12" stroke="#10304a" stroke-width="1.4"/><path d="M13 3 L13 0.5 M8 5 L6.5 3.5" stroke="#506070" stroke-width="1.6"/></svg>
<div class="t" style="left:957px;top:327px;">: 6 s</div>
<svg style="left:996px;top:323px" width="21" height="22"><ellipse cx="9" cy="9" rx="8.5" ry="8" fill="#7ce0e8" opacity="0.75"/><path d="M4 10 Q4 4 10 4 Q17 5 18 12 Q17 19 11 20 Q5 19 4 14 Z" fill="#6a5440"/><circle cx="11.5" cy="12" r="4.5" fill="#c8a878"/><circle cx="11.5" cy="12" r="2" fill="#4a3420"/><path d="M6 8 Q8 5 12 5" stroke="#e0fcff" stroke-width="1.4" fill="none"/></svg>
<div class="t" style="left:1017px;top:327px;">: 3 au/s</div>
<div class="t" style="left:842px;top:361px;">Signature: 1250.84 m2</div>
<div class="t" style="left:962px;top:361px;">Cargohold: 250 m3</div>
<div class="t" style="left:842px;top:377px;">Dronebay: 15 / 15 m3</div>
<div class="t" style="left:842px;top:393px;">Price: 0 isk</div>
<div class="t" style="left:842px;top:409px;">Fleet Commander - right click to set</div>
<div class="t" style="left:842px;top:425px;">Wing Commander - right click to set</div>
<div class="t" style="left:842px;top:441px;">SC - All level V</div>
<svg style="left:548px;top:87px" width="16" height="15"><path d="M1 7 L8 1 L15 5 L14 9 L7 14 L1 10 Z" fill="#1e5e5e"/><path d="M3 7 L8 3 L13 6 L8 10 Z" fill="#3cc8b4"/><path d="M1 10 L7 14 L14 9 L14 11 L7 15 L1 12 Z" fill="#2a3838"/></svg>
<svg style="left:582px;top:86px" width="16" height="17"><ellipse cx="8" cy="8.5" rx="7" ry="3" fill="none" stroke="#8a8070" stroke-width="1.1" transform="rotate(30 8 8.5)"/><ellipse cx="8" cy="8.5" rx="7" ry="3" fill="none" stroke="#8a8070" stroke-width="1.1" transform="rotate(-30 8 8.5)"/><ellipse cx="8" cy="8.5" rx="3" ry="7" fill="none" stroke="#a09888" stroke-width="1.1"/></svg>
<svg style="left:622px;top:87px" width="12" height="15"><path d="M3 2 L9 1 L11 5 L6 14 L1 11 Z" fill="#5a4a30"/><path d="M4 3 L7 2 L3 12 L2 10 Z" fill="#e8dcc0"/></svg>
<!--/RIGHT-->

</body></html>
